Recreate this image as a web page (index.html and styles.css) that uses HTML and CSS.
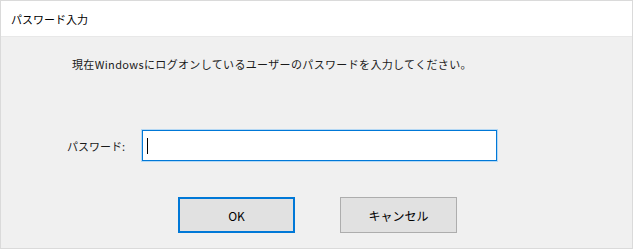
FILE: index.html
```html
<!DOCTYPE html>
<html lang="ja">
<head>
  <meta charset="UTF-8">
  <title>パスワード入力</title>
  <link rel="stylesheet" href="styles.css">
</head>
<body>
  <div class="dialog">
    <div class="title-bar">パスワード入力</div>
    <div class="dialog-body">
      <p class="message">現在Windowsにログオンしているユーザーのパスワードを入力してください。</p>
      <div class="password-row">
        <label class="password-label" for="pw">パスワード:</label>
        <div class="password-input" id="pw"><span class="caret"></span></div>
      </div>
      <div class="buttons">
        <button class="btn btn-default">OK</button>
        <button class="btn">キャンセル</button>
      </div>
    </div>
  </div>
</body>
</html>
```

FILE: styles.css
```css
html, body {
  margin: 0;
  padding: 0;
}
body {
  width: 633px;
  height: 249px;
  font-family: "Noto Sans CJK JP", "Noto Sans", sans-serif;
  font-size: 11px;
  color: #1a1a1a;
}
.dialog {
  box-sizing: border-box;
  width: 633px;
  height: 249px;
  border: 1px solid #dadada;
  background-color: #f0f0f0;
  display: flex;
  flex-direction: column;
}
.title-bar {
  height: 35px;
  background-color: #fff;
  border-bottom: 1px solid #e8e8e8;
  padding-left: 10px;
  display: flex;
  align-items: center;
  font-size: 11px;
  color: #000;
}
.dialog-body {
  flex: 1;
}
.message {
  margin: 19px 0 0 71px;
  line-height: 16px;
  font-size: 11px;
  letter-spacing: 0.35px;
}
.password-row {
  display: flex;
  align-items: center;
  margin-top: 58px;
  padding-left: 66px;
}
.password-label {
  width: 75px;
  font-size: 11px;
}
.password-input {
  box-sizing: border-box;
  width: 355px;
  height: 31px;
  background-color: #fff;
  border: 1px solid #0078d7;
  box-shadow: 0 0 0 1px #b5d8f4;
  display: flex;
  align-items: center;
  padding-left: 4px;
}
.caret {
  width: 1px;
  height: 16px;
  background-color: #000;
}
.buttons {
  display: flex;
  gap: 45px;
  margin-top: 36px;
  padding-left: 177px;
}
.btn {
  box-sizing: border-box;
  width: 117px;
  height: 36px;
  background-color: #e1e1e1;
  border: 1px solid #adadad;
  font-family: "Noto Sans CJK JP", "Noto Sans", sans-serif;
  font-size: 12px;
  color: #000;
  padding: 0;
}
.btn-default {
  border: 2px solid #0078d7;
}
```
